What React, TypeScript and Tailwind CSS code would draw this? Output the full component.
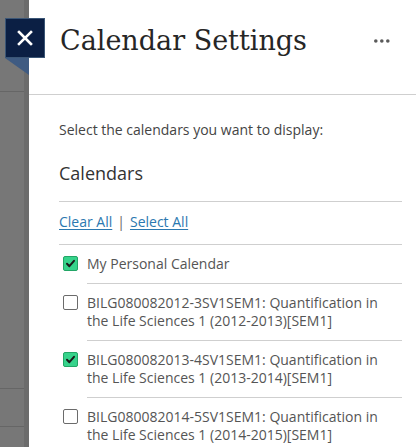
import React from "react";

const items = [
  { label: "My Personal Calendar", checked: true },
  { label: "BILG080082012-3SV1SEM1: Quantification in the Life Sciences 1 (2012-2013)[SEM1]", checked: false },
  { label: "BILG080082013-4SV1SEM1: Quantification in the Life Sciences 1 (2013-2014)[SEM1]", checked: true },
  { label: "BILG080082014-5SV1SEM1: Quantification in the Life Sciences 1 (2014-2015)[SEM1]", checked: false },
];

function Box({ checked }: { checked: boolean }) {
  if (checked) {
    return (
      <div className="w-[15px] h-[15px] rounded-[2px] bg-[#36d38b] border border-[#22a566] flex items-center justify-center">
        <svg width="11" height="11" viewBox="0 0 11 11">
          <path d="M2 5.8 L4.4 8.2 L9 2.8" fill="none" stroke="#1b1b1b" strokeWidth="2" strokeLinecap="round" strokeLinejoin="round" />
        </svg>
      </div>
    );
  }
  return <div className="w-[15px] h-[15px] rounded-[2px] bg-white border border-[#6b6b6b]" />;
}

export default function App() {
  return (
    <div className="relative w-[416px] h-[447px] overflow-hidden flex bg-white" style={{ fontFamily: '"Open Sans", sans-serif' }}>
      {/* overlay background */}
      <div className="w-[29px] h-full flex shrink-0">
        <div className="w-[24px] h-full bg-[#777777] flex flex-col">
          <div className="h-[92px] border-b border-[#666666]" />
          <div className="h-[297px] border-b border-[#666666]" />
          <div className="h-[38px] border-b border-[#666666]" />
        </div>
        <div className="w-[5px] h-full bg-[#6c6c6c]" />
      </div>

      {/* panel */}
      <div className="flex-1 flex flex-col bg-white">
        <div className="h-[95px] border-b border-[#cfcfcf] flex items-start justify-between pl-[31px] pr-[26px] pt-[24px] shrink-0">
          <div className="text-[27px] leading-[34px] text-[#262626]" style={{ fontFamily: '"DejaVu Serif", serif' }}>
            Calendar Settings
          </div>
          <svg width="16" height="4" viewBox="0 0 16 4" className="mt-[15px]">
            <circle cx="1.8" cy="2" r="1.8" fill="#5a5a5a" />
            <circle cx="7.8" cy="2" r="1.8" fill="#5a5a5a" />
            <circle cx="13.8" cy="2" r="1.8" fill="#5a5a5a" />
          </svg>
        </div>

        <div className="pl-[30px] pr-[14px] flex flex-col">
          <div className="pt-[25px] text-[14px] leading-[20px] text-[#444]">Select the calendars you want to display:</div>
          <div className="pt-[21px] pb-[16px] border-b border-[#cfcfcf] text-[18px] leading-[24px] text-[#333]">Calendars</div>
          <div className="pt-[10px] pb-[12px] border-b border-[#cfcfcf] text-[14px] leading-[20px] text-[#666]">
            <span className="text-[#2b78b0] underline underline-offset-2">Clear All</span>
            <span className="mx-[5px]">|</span>
            <span className="text-[#2b78b0] underline underline-offset-2">Select All</span>
          </div>
          <div className="flex flex-col">
            {items.map((it, i) => (
              <div key={i} className="flex items-start">
                <div className="w-[28px] pl-[4px] pt-[11px] shrink-0">
                  <Box checked={it.checked} />
                </div>
                <div className="flex-1 py-[10px] border-b border-[#cfcfcf] text-[14px] leading-[18px] text-[#555]">
                  {it.label}
                </div>
              </div>
            ))}
          </div>
        </div>
      </div>

      {/* close button */}
      <div className="absolute left-[5px] top-[18px] flex flex-col">
        <div className="w-[40px] h-[40px] bg-[#0b1f44] border border-[#3b5676] flex items-center justify-center">
          <svg width="16" height="16" viewBox="0 0 16 16">
            <path d="M2 2 L14 14 M14 2 L2 14" stroke="#ffffff" strokeWidth="2.6" strokeLinecap="square" />
          </svg>
        </div>
        <svg width="24" height="17" viewBox="0 0 24 17">
          <polygon points="0,0 24,0 24,17" fill="#3f5b82" />
        </svg>
      </div>
    </div>
  );
}
